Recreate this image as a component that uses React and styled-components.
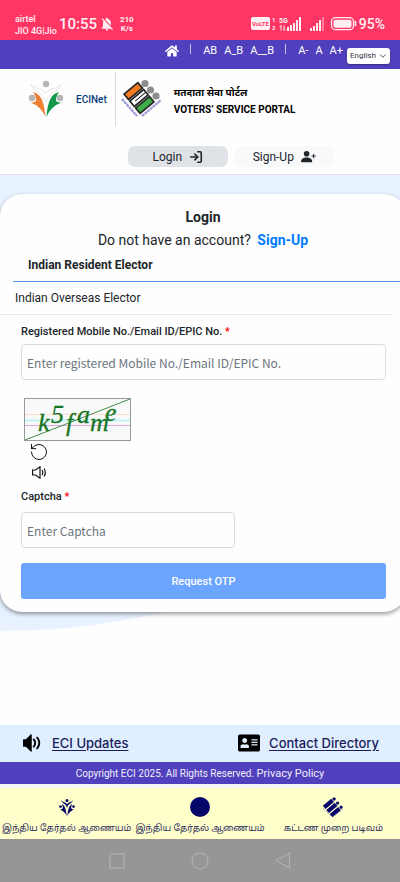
import styled, { createGlobalStyle } from 'styled-components';
import { LogIn, RotateCcw, ChevronDown } from 'lucide-react';
import { FaHome, FaAddressCard } from 'react-icons/fa';
import { BsPersonPlusFill } from 'react-icons/bs';
import { MdNotificationsOff } from 'react-icons/md';
import { ImVolumeMedium } from 'react-icons/im';

const GlobalStyle = createGlobalStyle`
  * {
    box-sizing: border-box;
  }

  body {
    margin: 0;
    background: #fefefe;
    color: #212529;
    font-family: Roboto, "Noto Sans", sans-serif;
    font-size: 12px;
    overflow-x: hidden;
  }

  button, input, select {
    font-family: inherit;
    margin: 0;
  }
`;

const Page = styled.div`
  min-height: 100vh;
  display: flex;
  flex-direction: column;
`;

const StatusBar = styled.div`
  height: 40px;
  padding: 8px 15px 0;
  display: flex;
  align-items: center;
  justify-content: space-between;
  background: #ff3564;
  color: #fff0f3;
`;

const StatusGroup = styled.div`
  display: flex;
  align-items: center;
  gap: ${(props) => props.$gap}px;

  svg {
    display: block;
    flex: none;
  }
`;

const Carrier = styled.div`
  padding-top: 2px;
  font-size: 9px;
  line-height: 12px;
  font-weight: 500;
`;

const Speed = styled.div`
  margin-left: 3px;
  font-size: 8px;
  line-height: 9px;
  font-weight: 700;
  text-align: center;
`;

const Clock = styled.span`
  font-size: ${(props) => props.$size}px;
  line-height: 20px;
  font-weight: 500;
`;

const TopBar = styled.nav`
  height: 29px;
  padding: 3px 10px 0 0;
  display: flex;
  align-items: flex-start;
  justify-content: flex-end;
  gap: 7px;
  background: #5140bd;
  color: #fff;
`;

const HomeLink = styled.a`
  color: inherit;
  height: 16px;
  display: flex;
  align-items: center;
`;

const Separator = styled.span`
  width: 1px;
  height: 10px;
  margin: 1px 5px 0 4px;
  background: #c5bfe8;
`;

const BarButton = styled.button`
  padding: 0;
  border: 0;
  background: none;
  color: inherit;
  font-size: 11px;
  line-height: 16px;
`;

const Language = styled.label`
  display: flex;
  align-items: center;
  margin: 5px 0 0 -3px;
  padding: 0 2px 0 3px;
  height: 16px;
  border-radius: 3px;
  background: #fff;
  color: #33363a;
  box-shadow: 0 1px 2px rgba(0, 0, 0, 0.3);

  select {
    appearance: none;
    padding: 0;
    width: 28px;
    border: 0;
    background: none;
    color: inherit;
    font-size: 8px;
    line-height: 14px;
  }
`;

const Header = styled.header`
  padding: 3px 0 7px;
  border-bottom: 1px solid #e2e2e8;
  background: #fefefe;
`;

const Brands = styled.div`
  display: flex;
  align-items: center;
  padding-left: 27px;
  height: 54px;

  svg {
    flex: none;
  }
`;

const EciNet = styled.a`
  display: flex;
  align-items: center;
  gap: 11px;
  height: 100%;
  padding-right: 8px;
  border-right: 1px solid #dcdce0;
  color: #0c3c80;
  font-size: 10px;
  font-weight: 500;
  text-decoration: none;
`;

const Portal = styled.div`
  display: flex;
  align-items: center;
  gap: 12px;
  padding-left: 5px;
`;

const PortalName = styled.div`
  padding-top: 3px;
  color: #000;
  font-size: 10px;
  line-height: 17px;
  font-weight: 700;
`;

const AuthButtons = styled.div`
  display: flex;
  gap: 7px;
  padding: 20px 66px 0 128px;
`;

const AuthButton = styled.button`
  flex: 1;
  height: 21px;
  display: flex;
  align-items: center;
  justify-content: center;
  gap: 7px;
  padding: 0;
  border: 0;
  border-radius: 7px;
  background: ${(props) => (props.$active ? '#dfe2e7' : '#f8f9fb')};
  color: #212529;
  font-size: 12px;
`;

/* big pale disc behind the card, centred above the left corner */
const Main = styled.main`
  flex: 1;
  padding: 19px 0 100px;
  overflow: hidden;
  background: radial-gradient(circle at 0 -260px, #e7f1ff 715px, #fefefe 717px);
`;

const Card = styled.section`
  margin-right: -6px;
  padding-bottom: 13px;
  border-radius: 22px;
  background: #fefefe;
  box-shadow: 0 2px 4px rgba(0, 0, 0, 0.4);
`;

const CardHead = styled.div`
  padding-top: 12px;
  text-align: center;
  font-size: 14px;
  line-height: 23px;

  h1 {
    margin: 0;
    font-size: inherit;
    font-weight: 700;
  }

  p {
    margin: 0;
  }

  a {
    margin-left: 3px;
    color: #007bff;
    font-weight: 700;
    text-decoration: none;
  }
`;

const Tab = styled.button`
  display: block;
  width: calc(100% - 13px);
  margin-left: ${(props) => (props.$active ? '13px' : '0')};
  height: ${(props) => (props.$active ? '30px' : '33px')};
  padding: ${(props) => (props.$active ? '0 15px 4px' : '0 15px')};
  border: 0;
  border-bottom: 1px solid ${(props) => (props.$active ? '#4f92e6' : '#e6e8ea')};
  background: none;
  color: #212529;
  font-size: 12px;
  line-height: 24px;
  font-weight: ${(props) => (props.$active ? 700 : 400)};
  text-align: left;
`;

const Form = styled.form`
  display: flex;
  flex-direction: column;
  padding: 8px 20px 0 21px;

  > label {
    font-size: 11px;
    line-height: 18px;
    font-weight: 500;
  }
`;

const Star = styled.span`
  color: #f00;
`;

const TextInput = styled.input`
  width: ${(props) => props.$width || '100%'};
  height: 36px;
  margin-top: ${(props) => props.$gap}px;
  padding: 0 5px;
  border: 1px solid #dadde1;
  border-radius: 4px;
  background: #fefefe;
  font-family: "Noto Sans CJK SC", "Noto Sans", sans-serif;
  font-size: 12px;

  &::placeholder {
    color: #6c757d;
    opacity: 1;
  }
`;

const CaptchaTools = styled.div`
  display: flex;
  flex-direction: column;
  align-items: flex-start;
  padding: 18px 3px 6px;

  svg {
    display: block;
  }
`;

const ToolButton = styled.button`
  display: flex;
  align-items: center;
  justify-content: center;
  width: 20px;
  height: 20px;
  margin-left: 5px;
  padding: 0;
  border: 0;
  background: none;
  color: #111;
`;

const Submit = styled.button`
  height: 36px;
  margin-top: 15px;
  border: 0;
  border-radius: 3px;
  background: #6ba5ff;
  color: #fff;
  font-size: 11px;
  font-weight: 500;
`;

const LinkBar = styled.div`
  display: flex;
  justify-content: space-between;
  height: 37px;
  padding: 0 21px 2px 23px;
  background: #dfefff;
`;

const FooterLink = styled.a`
  display: flex;
  align-items: center;
  gap: 9px;
  color: #1b1b5c;
  font-family: Inter, sans-serif;
  font-size: 13px;
  font-weight: 500;
  text-underline-offset: 2px;

  svg {
    color: #000;
  }
`;

const Copyright = styled.div`
  padding: 4px 0 2px;
  background: #5140bd;
  color: #f0eefa;
  font-size: 10px;
  line-height: 16px;
  text-align: center;

  a {
    color: inherit;
    font-size: 11px;
    text-decoration: none;
  }
`;

const AppTabs = styled.nav`
  display: grid;
  grid-template-columns: repeat(3, minmax(0, 1fr));
  height: 55px;
  border-top: 4px solid #f6f6f8;
  background: #ffffcb;
`;

const AppTab = styled.a`
  display: flex;
  flex-direction: column;
  align-items: center;
  gap: 4px;
  padding-top: 9px;
  color: #30305f;
  font-family: "Noto Sans Tamil", "Noto Sans", sans-serif;
  font-size: 9px;
  line-height: 16px;
  text-decoration: none;
  white-space: nowrap;
`;

const SystemNav = styled.div`
  display: flex;
  justify-content: center;
  gap: 59px;
  height: 43px;
  background: #969696;
`;

const SystemButton = styled.button`
  display: flex;
  align-items: center;
  justify-content: center;
  width: 24px;
  padding: 0;
  border: 0;
  background: none;
`;

function Bars({ x, levels, faint }) {
  return levels.map((h, i) => (
    <rect key={h} x={x + i * 3} y={14 - h} width="2" height={h} fill="currentColor" opacity={i >= faint ? 0.4 : 1} />
  ));
}

function StatusIcons() {
  return (
    <svg width="106" height="14" viewBox="0 0 106 14">
      <rect x="0" y="0" width="19" height="13" rx="2" fill="#fff0f3" />
      <text x="1" y="9" fontSize="6" fontWeight="700" fill="#ff3564">VoLTE</text>
      <text x="21" y="5" fontSize="6" fontWeight="700" fill="currentColor">1</text>
      <text x="21" y="13" fontSize="6" fontWeight="700" fill="currentColor">2</text>
      <text x="28" y="6" fontSize="7" fontWeight="700" fill="currentColor">5G</text>
      <path d="M30 8.500v5M28.500 10L30 8.500M33 8.500v5M33 13.500l1.500-1.500" stroke="currentColor" fill="none" />
      <Bars x={36} levels={[4, 6, 8, 11, 14]} faint={5} />
      <Bars x={59} levels={[3, 5, 8, 11, 14]} faint={4} />
      <rect x="80.500" y="0.700" width="22" height="12" rx="4" fill="none" stroke="currentColor" strokeWidth="1.300" />
      <rect x="82.500" y="2.700" width="18" height="8" rx="2" fill="currentColor" />
      <path d="M104.500 4.500v4" stroke="currentColor" strokeWidth="1.600" strokeLinecap="round" />
    </svg>
  );
}

function EciLogo() {
  return (
    <svg width="38" height="38" viewBox="0 0 38 38">
      <circle cx="19" cy="4" r="3.200" fill="#b5b5b5" />
      <circle cx="5" cy="18" r="3.200" fill="#b5b5b5" />
      <circle cx="33" cy="18" r="3.200" fill="#b5b5b5" />
      <path d="M4 4c2 8 10 6 15 18C24 10 32 12 34 4c-2 5-10 3-15 9C14 7 6 9 4 4z" fill="#fff" stroke="#dcdcdc" strokeWidth="0.700" />
      <path d="M0 22c4 1 6 1 9-1 0-4-1-6-3-9 7 2 11 7 12.500 25C15 29 9 23 0 22z" fill="#ee8135" />
      <path d="M38 22c-4 1-6 1-9-1 0-4 1-6 3-9-7 2-11 7-12.500 25C23 29 29 23 38 22z" fill="#14994c" />
    </svg>
  );
}

function PortalLogo() {
  return (
    <svg width="41" height="40" viewBox="0 0 41 40">
      <circle cx="24" cy="4.500" r="3.600" fill="#8d8d91" />
      <circle cx="29.500" cy="11" r="3.600" fill="#8d8d91" />
      <circle cx="35" cy="17" r="3.600" fill="#8d8d91" />
      <g transform="rotate(-40 18 19)" stroke="#262626" strokeWidth="1.700">
        <rect x="9" y="6.500" width="18" height="7" fill="#f47b20" />
        <rect x="9" y="15.500" width="18" height="7" fill="#fff" />
        <path d="M13 19h14" strokeWidth="1" />
        <rect x="9" y="24.500" width="18" height="7" fill="#3fae49" />
      </g>
      <path d="M1 20l15 17M21 37l19-16" stroke="#9a97d8" strokeWidth="2.200" strokeDasharray="3 0.500" fill="none" />
    </svg>
  );
}

const captchaLetters = [
  { char: 'k', x: 14, y: 33 },
  { char: '5', x: 27, y: 25 },
  { char: 'f', x: 42, y: 33 },
  { char: 'a', x: 53, y: 25 },
  { char: 'm', x: 66, y: 33 },
  { char: 'e', x: 81, y: 23 },
];

function Captcha() {
  return (
    <svg width="107" height="44" viewBox="0 0 107 44" role="img" aria-label="Captcha image">
      <rect x="0.500" y="0.500" width="106" height="42" fill="#f8faf9" stroke="#999" />
      <path d="M1 16.500h105" stroke="#ffd9d2" />
      <path d="M1 22.500h105" stroke="#c4f1f3" strokeWidth="2" />
      <path d="M1 27.500h105" stroke="#dfa6e2" />
      <path d="M1 42L106 1" stroke="#468c4a" />
      <g fill="#157522" stroke="#157522" strokeWidth="0.300" fontFamily="Liberation Serif" fontStyle="italic" fontSize="26">
        {captchaLetters.map(({ char, x, y }) => (
          <text key={char} x={x} y={y}>{char}</text>
        ))}
      </g>
    </svg>
  );
}

function Speaker() {
  return (
    <svg width="14" height="13" viewBox="0 0 14 13" fill="none" stroke="currentColor" strokeWidth="1.200">
      <path d="M0.600 4h3L8 0.800v11.400L3.600 9h-3z" />
      <path d="M10 4c1 1.500 1 3.500 0 5M12 2.500c1.700 2.500 1.700 5.500 0 8" />
    </svg>
  );
}

function EciMark() {
  return (
    <svg width="20" height="20" viewBox="0 0 20 20" fill="#07076b">
      <circle cx="10" cy="3.400" r="1.500" />
      <circle cx="3.500" cy="9.600" r="1.300" />
      <circle cx="16.500" cy="9.600" r="1.300" />
      <path d="M4 3c1 4 5 3 6 8 1-5 5-4 6-8-1 2-4 2-6 4-2-2-5-2-6-4z" />
      <path d="M2 12c2 1 3 0 4-1L5 7c3 2 4 5 4.600 12C8 15 5 13 2 12zM18 12c-2 1-3 0-4-1l1-4c-3 2-4 5-4.600 12 1.600-4 4.600-6 7.600-7z" />
    </svg>
  );
}

function VoterMark() {
  return (
    <svg width="22" height="20" viewBox="0 0 22 20" fill="#07076b">
      <g transform="rotate(-40 11 10)">
        <rect x="4" y="2.500" width="11" height="4.200" />
        <rect x="4" y="7.900" width="11" height="4.200" />
        <rect x="4" y="13.300" width="11" height="4.200" />
        <circle cx="17" cy="4.600" r="1.600" />
        <circle cx="17" cy="10" r="1.600" />
        <circle cx="17" cy="15.400" r="1.600" />
      </g>
      <path d="M1 11l8 8M12 19l9-7" stroke="#8c8cb0" strokeDasharray="1 1" />
    </svg>
  );
}

export default function App() {
  return (
    <Page>
      <GlobalStyle />
      <StatusBar>
        <StatusGroup $gap={2}>
          <Carrier>
            airtel
            <br />
            JIO 4G|Jio
          </Carrier>
          <Clock $size={15}>10:55</Clock>
          <MdNotificationsOff size={16} />
          <Speed>
            210
            <br />
            K/s
          </Speed>
        </StatusGroup>
        <StatusGroup $gap={2}>
          <StatusIcons />
          <Clock $size={14}>95%</Clock>
        </StatusGroup>
      </StatusBar>

      <TopBar>
        <HomeLink href="#home" aria-label="Home"><FaHome size={14} /></HomeLink>
        <Separator />
        <BarButton>AB</BarButton>
        <BarButton>A_B</BarButton>
        <BarButton>A__B</BarButton>
        <Separator />
        <BarButton>A-</BarButton>
        <BarButton>A</BarButton>
        <BarButton>A+</BarButton>
        <Language>
          <select aria-label="Language" defaultValue="English">
            <option>English</option>
          </select>
          <ChevronDown size={10} />
        </Language>
      </TopBar>

      <Header>
        <Brands>
          <EciNet href="#ecinet">
            <EciLogo />
            ECINet
          </EciNet>
          <Portal>
            <PortalLogo />
            <PortalName>
              मतदाता सेवा पोर्टल
              <br />
              VOTERS’ SERVICE PORTAL
            </PortalName>
          </Portal>
        </Brands>
        <AuthButtons>
          <AuthButton $active>
            Login
            <LogIn size={14} strokeWidth={2.75} />
          </AuthButton>
          <AuthButton>
            Sign-Up
            <BsPersonPlusFill size={15} />
          </AuthButton>
        </AuthButtons>
      </Header>

      <Main>
        <Card>
          <CardHead>
            <h1>Login</h1>
            <p>
              Do not have an account?
              {' '}
              <a href="#signup">Sign-Up</a>
            </p>
          </CardHead>
          <Tab type="button" $active>Indian Resident Elector</Tab>
          <Tab type="button">Indian Overseas Elector</Tab>
          <Form onSubmit={(e) => e.preventDefault()}>
            <label htmlFor="user">
              Registered Mobile No./Email ID/EPIC No.
              {' '}
              <Star>*</Star>
            </label>
            <TextInput id="user" $gap={3} placeholder="Enter registered Mobile No./Email ID/EPIC No." />
            <CaptchaTools>
              <Captcha />
              <ToolButton type="button" aria-label="Refresh captcha"><RotateCcw size={20} strokeWidth={1.2} /></ToolButton>
              <ToolButton type="button" aria-label="Play captcha"><Speaker /></ToolButton>
            </CaptchaTools>
            <label htmlFor="captcha">
              Captcha
              {' '}
              <Star>*</Star>
            </label>
            <TextInput id="captcha" $gap={6} $width="214px" placeholder="Enter Captcha" />
            <Submit type="submit">Request OTP</Submit>
          </Form>
        </Card>
      </Main>

      <footer>
        <LinkBar>
          <FooterLink href="#updates">
            <ImVolumeMedium size={20} />
            ECI Updates
          </FooterLink>
          <FooterLink href="#contact">
            <FaAddressCard size={22} />
            Contact Directory
          </FooterLink>
        </LinkBar>
        <Copyright>
          Copyright ECI 2025. All Rights Reserved.
          {' '}
          <a href="#privacy">Privacy Policy</a>
        </Copyright>
        <AppTabs>
          <AppTab href="#eci">
            <EciMark />
            இந்திய தேர்தல் ஆணையம்
          </AppTab>
          <AppTab href="#commission">
            <svg width="20" height="20"><circle cx="10" cy="10" r="10" fill="#07076b" /></svg>
            இந்திய தேர்தல் ஆணையம்
          </AppTab>
          <AppTab href="#forms">
            <VoterMark />
            கட்டண முறை படிவம்
          </AppTab>
        </AppTabs>
        <SystemNav>
          <SystemButton aria-label="Recent apps">
            <svg width="16" height="16" fill="none" stroke="#b5b5b5"><rect x="1" y="1" width="14" height="14" /></svg>
          </SystemButton>
          <SystemButton aria-label="Home screen">
            <svg width="18" height="18" fill="none" stroke="#b5b5b5"><circle cx="9" cy="9" r="8" /></svg>
          </SystemButton>
          <SystemButton aria-label="Back">
            <svg width="16" height="17" fill="none" stroke="#b5b5b5"><path d="M14.500 1v15L1 8.500z" /></svg>
          </SystemButton>
        </SystemNav>
      </footer>
    </Page>
  );
}
